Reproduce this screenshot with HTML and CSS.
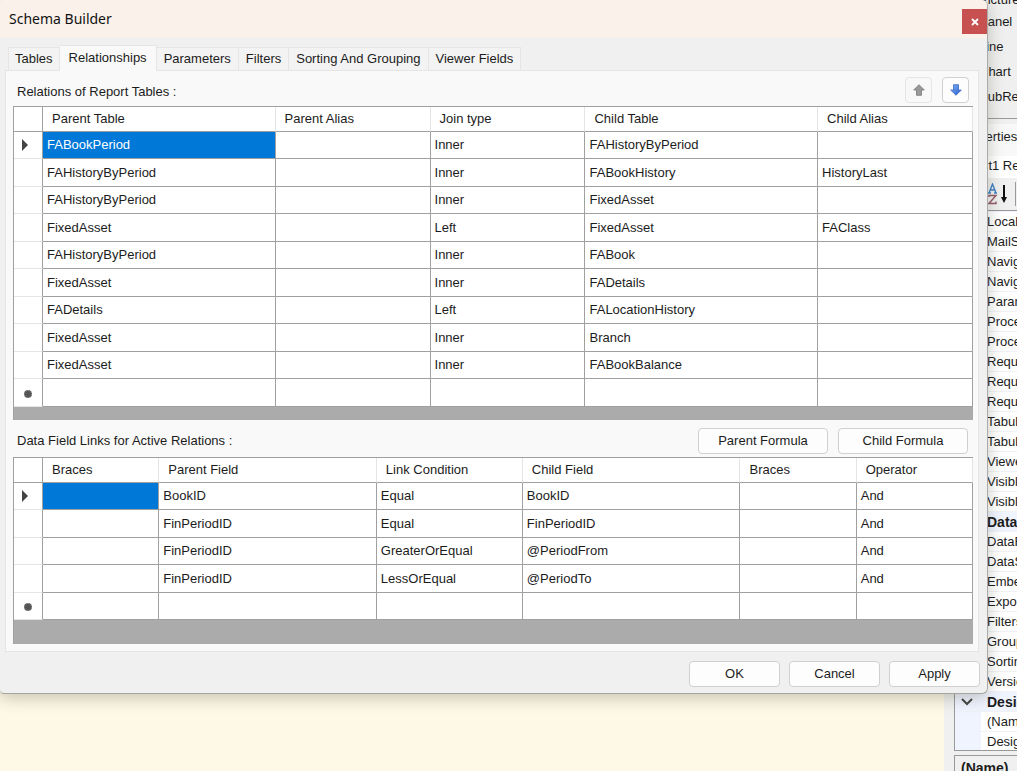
FILE: index.html
```html
<!DOCTYPE html>
<html lang="en">
<head>
<meta charset="utf-8">
<title>Schema Builder</title>
<link rel="stylesheet" href="styles.css">
</head>
<body>
<div class="desktop">
  <main class="canvas"></main>
  <aside class="side">
    <ul class="toolbox">
      <li>PictureBox</li><li>Panel</li><li>Line</li><li>Chart</li><li>SubReport</li>
    </ul>
    <h2 class="side-title">Properties</h2>
    <div class="object-name">Report1 Report</div>
    <div class="side-tools">
      <svg class="sort-icon" width="22" height="22" viewBox="0 0 22 22" aria-label="Sort alphabetically">
        <g fill="none" stroke-width="1.4">
          <path d="M1 10 4.500 1 8 10M2 7H7M0 10H3M6 10H9" stroke="#3f83c5"/>
          <path d="M1 14V12.500H8L1 20.500H8V18.500" stroke="#925967"/>
        </g>
        <path d="M15 2H17V14H19L16 20 13 14H15Z" fill="#111"/>
      </svg>
      <span class="tool-sep"></span>
    </div>
    <div class="props">
      <ul class="prop-list">
        <li>Localizable</li><li>MailSettings</li><li>NavigateParams</li><li>NavigateReport</li>
        <li>Parameters</li><li>ProcessOrder</li><li>ProcessMode</li><li>RequestParams</li>
        <li>RequestMode</li><li>RequestType</li><li>Tabular</li><li>TabularMode</li>
        <li>ViewerFields</li><li>Visible</li><li>VisibleExpr</li>
        <li class="category">Data</li>
        <li>DataField</li><li>DataSource</li><li>Embedded</li><li>ExportMode</li><li>Filters</li>
        <li>Groups</li><li>Sorting</li><li>Version</li>
        <li class="category"><svg class="chevron" width="12" height="8" viewBox="0 0 12 8"><path d="M1 1 6 6 11 1" fill="none" stroke="#444" stroke-width="2"/></svg>Design</li>
        <li>(Name)</li><li>DesignMode</li>
      </ul>
    </div>
    <div class="prop-help">(Name)</div>
  </aside>

  <section class="dialog" role="dialog" aria-labelledby="dialog-title">
    <header class="titlebar">
      <h1 class="title" id="dialog-title">Schema Builder</h1>
      <button class="close" aria-label="Close"><svg width="8" height="8" viewBox="0 0 8 8"><path d="M1 1 7 7M7 1 1 7" stroke="#fff" stroke-width="1.8"/></svg></button>
    </header>
    <div class="tabs" role="tablist">
      <button class="tab" role="tab">Tables</button>
      <button class="tab active" role="tab" aria-selected="true">Relationships</button>
      <button class="tab" role="tab">Parameters</button>
      <button class="tab" role="tab">Filters</button>
      <button class="tab" role="tab">Sorting And Grouping</button>
      <button class="tab" role="tab">Viewer Fields</button>
    </div>
    <div class="pane" role="tabpanel">
      <div class="bar">
        <span class="caption low" id="relations-label">Relations of Report Tables :</span>
        <button class="btn arrow" disabled aria-label="Move up"><svg width="12" height="12" viewBox="0 0 12 12"><path d="M6 .7 11.300 6H8.500V11.300H3.500V6H.7Z" fill="#999" stroke="#777" stroke-width=".8"/></svg></button>
        <button class="btn arrow" aria-label="Move down"><svg width="12" height="12" viewBox="0 0 12 12"><defs><linearGradient id="blue" x1="0" x2="1" y1="0" y2="1"><stop offset="0" stop-color="#82b4f7"/><stop offset="1" stop-color="#2158c9"/></linearGradient></defs><path d="M6 11.300 11.300 6H8.500V.7H3.500V6H.7Z" fill="url(#blue)" stroke="#3c69c4" stroke-width=".8"/></svg></button>
      </div>
      <div class="grid-box first">
        <table class="grid" aria-labelledby="relations-label">
          <colgroup><col class="c-head"><col class="c-wide"><col class="c-mid"><col class="c-mid"><col class="c-wide"><col class="c-mid"></colgroup>
          <thead><tr><th></th><th>Parent Table</th><th>Parent Alias</th><th>Join type</th><th>Child Table</th><th>Child Alias</th></tr></thead>
          <tbody>
            <tr><td><span class="current"></span></td><td class="selected">FABookPeriod</td><td></td><td>Inner</td><td>FAHistoryByPeriod</td><td></td></tr>
            <tr><td></td><td>FAHistoryByPeriod</td><td></td><td>Inner</td><td>FABookHistory</td><td>HistoryLast</td></tr>
            <tr><td></td><td>FAHistoryByPeriod</td><td></td><td>Inner</td><td>FixedAsset</td><td></td></tr>
            <tr><td></td><td>FixedAsset</td><td></td><td>Left</td><td>FixedAsset</td><td>FAClass</td></tr>
            <tr><td></td><td>FAHistoryByPeriod</td><td></td><td>Inner</td><td>FABook</td><td></td></tr>
            <tr><td></td><td>FixedAsset</td><td></td><td>Inner</td><td>FADetails</td><td></td></tr>
            <tr><td></td><td>FADetails</td><td></td><td>Left</td><td>FALocationHistory</td><td></td></tr>
            <tr><td></td><td>FixedAsset</td><td></td><td>Inner</td><td>Branch</td><td></td></tr>
            <tr><td></td><td>FixedAsset</td><td></td><td>Inner</td><td>FABookBalance</td><td></td></tr>
            <tr><td><span class="new-row"></span></td><td></td><td></td><td></td><td></td><td></td></tr>
          </tbody>
        </table>
      </div>
      <div class="bar second">
        <span class="caption" id="links-label">Data Field Links for Active Relations :</span>
        <button class="btn formula">Parent Formula</button>
        <button class="btn formula">Child Formula</button>
      </div>
      <div class="grid-box last">
        <table class="grid" aria-labelledby="links-label">
          <colgroup><col class="c-head"><col class="c-narrow"><col class="c-field"><col class="c-cond"><col class="c-field"><col class="c-narrow"><col class="c-narrow"></colgroup>
          <thead><tr><th></th><th>Braces</th><th>Parent Field</th><th>Link Condition</th><th>Child Field</th><th>Braces</th><th>Operator</th></tr></thead>
          <tbody>
            <tr><td><span class="current"></span></td><td class="selected"></td><td>BookID</td><td>Equal</td><td>BookID</td><td></td><td>And</td></tr>
            <tr><td></td><td></td><td>FinPeriodID</td><td>Equal</td><td>FinPeriodID</td><td></td><td>And</td></tr>
            <tr><td></td><td></td><td>FinPeriodID</td><td>GreaterOrEqual</td><td>@PeriodFrom</td><td></td><td>And</td></tr>
            <tr><td></td><td></td><td>FinPeriodID</td><td>LessOrEqual</td><td>@PeriodTo</td><td></td><td>And</td></tr>
            <tr><td><span class="new-row"></span></td><td></td><td></td><td></td><td></td><td></td><td></td></tr>
          </tbody>
        </table>
      </div>
    </div>
    <footer class="actions">
      <button class="btn action">OK</button>
      <button class="btn action">Cancel</button>
      <button class="btn action">Apply</button>
    </footer>
  </section>
</div>
</body>
</html>
```
FILE: styles.css
```css
* { box-sizing: border-box; }
body { margin: 0; font: 13px/16px "Liberation Sans", Arial, sans-serif; color: #1c1c1c; }
button { font: inherit; color: inherit; padding: 0; margin: 0; border: 0; }
h1, h2, ul { margin: 0; padding: 0; list-style: none; font-weight: normal; }

.desktop { position: relative; display: flex; height: 100vh; overflow: hidden; background: #f0f0f0; }
.canvas { flex: 1; background: #fef9e7; }

/* docked panels */
.side { width: 73px; display: flex; flex-direction: column; overflow: hidden; white-space: nowrap; border-left: 5px solid #f0f0f0; }
.side > * { flex-shrink: 0; }
.toolbox { height: 119px; overflow: hidden; padding-left: 30px; background: #efefef; border-bottom: 1px solid #999; }
.toolbox li { height: 25px; line-height: 25px; }
.toolbox li:first-child { height: 9px; line-height: 0; }
.side-title { font-size: 13px; height: 32px; line-height: 26px; margin-top: 5px; padding-left: 9px; background: #f8f8f8; }
.object-name { height: 22px; line-height: 20px; padding-left: 4px; background: #fff; }
.side-tools { height: 32px; display: flex; align-items: center; justify-content: space-between; padding-left: 39px; }
.tool-sep { width: 1px; height: 24px; margin-right: 1px; background: #999; }
.props { height: 541px; margin-left: 5px; border: 1px solid #999; border-right: 0; background: #f0f4ff; overflow: hidden; }
.prop-list { padding-top: 1px; }
.prop-list li { height: 20px; line-height: 20px; margin-left: 26px; padding-left: 6px; background: #fff; border-bottom: 1px solid #f0f2f8; }
.prop-list .category { margin-left: 0; padding-left: 32px; background: #f0f4ff; font-size: 14px; font-weight: bold; position: relative; }
.chevron { position: absolute; left: 6px; top: 6px; }
.prop-help { flex: 1; margin: 4px 0 0 5px; padding: 4px 6px 0; border: 1px solid #999; border-right: 0; font-size: 14px; font-weight: bold; }

/* dialog window */
.dialog { position: absolute; left: 0; top: 0; right: 29px; background: #f0f0f0; border-right: 1px solid #aaa; border-bottom: 1px solid #a6a6a0; border-radius: 4px 6px 6px 4px; box-shadow: 0 4px 16px rgba(60, 60, 40, .28); overflow: hidden; }
.titlebar { height: 38px; display: flex; justify-content: space-between; background: #faf1eb; }
.title { font: 14px/38px "Noto Sans", sans-serif; padding-left: 9px; color: #111; }
.close { width: 25px; height: 25px; margin-top: 9px; background: #c75050; display: grid; place-items: center; }
.tabs { height: 32px; padding: 7px 8px 0; display: flex; align-items: flex-end; }
.tab { height: 23px; padding: 0 7px; background: #f3f3f3; border: 1px solid #e5e5e5; border-bottom: 0; border-left-width: 0; }
.tab:first-child { border-left-width: 1px; padding: 0 6px; }
.tab.active { height: 26px; margin-bottom: -1px; padding: 0 9px 2px; background: #f9f9f9; position: relative; }
.pane { margin: 0 8px 0 5px; padding: 6px 5px 7px 7px; background: #f9f9f9; border: 1px solid #e5e5e5; }
.bar { display: flex; align-items: center; gap: 10px; height: 26px; margin-bottom: 3px; padding: 0 4px 0 4px; }
.bar.second { margin-top: 8px; padding-right: 5px; }
.caption { flex: 1; }
.caption.low { padding-top: 3px; }
.btn { height: 26px; background: #fdfdfd; border: 1px solid #d0d0d0; border-radius: 4px; }
.arrow { width: 27px; display: grid; place-items: center; }
.arrow:disabled { background: #f8f8f8; border-color: #e5e5e5; }
.formula { width: 130px; }
.actions { display: flex; justify-content: flex-end; gap: 9px; padding: 9px 7px 6px; }
.action { width: 91px; }

/* data grids */
.grid-box { background: #ababab; border-left: 1px solid #a0a0a0; border-top: 1px solid #a0a0a0; }
.first { padding-bottom: 13px; }
.last { padding-bottom: 24px; }
.grid { width: 100%; table-layout: fixed; border-collapse: separate; border-spacing: 0; background: #fff; }
.grid th, .grid td { padding: 0; text-align: left; font-weight: normal; white-space: nowrap; overflow: hidden; }
.grid th { height: 25px; padding-left: 9px; border-bottom: 1px solid #a0a0a0; border-right: 1px solid #e5e5e5; }
.grid td { height: 27px; padding-left: 4px; border-right: 1px solid #a0a0a0; border-bottom: 1px solid #a0a0a0; }
.grid tr:nth-child(even) td { height: 28px; }
.grid th:first-child { border-right-color: #a0a0a0; }
.grid td:first-child { padding-left: 8px; border-bottom-color: #e5e5e5; }
.grid .selected { background: #0078d7; color: #fff; }
.c-head { width: 29px; }
.c-wide { width: 25%; }
.first .c-wide { width: 24.250%; }
.c-narrow { width: 12.500%; }
.c-field { width: 23.400%; }
.c-cond { width: 15.700%; }
.current { display: block; border-left: 6px solid #444; border-top: 6px solid transparent; border-bottom: 6px solid transparent; width: 0; }
.new-row { display: block; width: 8px; height: 8px; margin: 2px 0 0 2px; border-radius: 4px; background: #555; border: 1px dotted #999; }
```
